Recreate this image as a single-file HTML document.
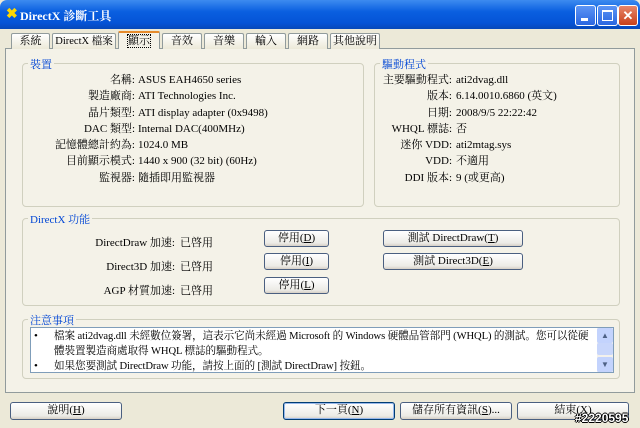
<!DOCTYPE html>
<html><head><meta charset="utf-8"><style>
*{margin:0;padding:0;box-sizing:border-box}
body{width:640px;height:428px;background:#ece9d8;font-family:"Liberation Serif","Noto Serif CJK SC","Noto Sans CJK TC",serif;font-size:11px;color:#000;position:relative;overflow:hidden}
.a{position:absolute;white-space:nowrap}
.title{left:0;top:0;width:640px;height:29px;background:linear-gradient(#3d8bf0,#0a5fe0 40%,#0553d6 80%,#0748b8);border-radius:7px 7px 0 0}
.tb{top:5px;width:21px;height:21px;border:1px solid #fff;border-radius:3px;background:linear-gradient(#5d95f5,#2a66e0)}
.tab{top:33px;height:16px;border:1px solid #919b9c;border-bottom:none;background:linear-gradient(#fff,#ece9d8);text-align:center;line-height:15px;border-radius:2px 2px 0 0}
.panel{left:5px;top:48px;width:630px;height:345px;border:1px solid #919b9c;background:#f4f2e8}
.grp{border:1px solid #d0d0bf;border-radius:4px}
.gt{color:#0046d5;background:#f4f2e8;padding:0 2px}
.r{text-align:right}
.btn{border:1px solid #4a5f80;border-radius:3px;background:linear-gradient(#fff,#ecebe6 80%,#d6d0c5);text-align:center;line-height:15px}
</style></head><body>
<div class="a title"></div>
<div class="a" style="left:6px;top:6px;color:#ffd700;font-size:14px;font-weight:bold">✖</div>
<div class="a" style="left:20px;top:7px;color:#fff;font-weight:bold;font-size:12px">DirectX 診斷工具</div>
<div class="a tb" style="left:575px"><div style="position:absolute;left:5px;top:12px;width:7px;height:3px;background:#fff"></div></div>
<div class="a tb" style="left:597px"><div style="position:absolute;left:4px;top:4px;width:11px;height:11px;border:1px solid #fff;border-top-width:2px"></div></div>
<div class="a tb" style="left:618px;width:20px;background:linear-gradient(#e8866a,#c8401a);color:#fff;text-align:center;font-weight:bold;font-size:13px;line-height:19px">✕</div>

<div class="a panel"></div>
<div class="a tab" style="left:11px;width:39px">系統</div>
<div class="a tab" style="left:52px;width:64px;font-size:10.5px">DirectX 檔案</div>
<div class="a tab" style="left:118px;top:31px;width:42px;height:18px;background:#f4f2e8;border-top:2px solid #e68b2c;line-height:16px"><span style="outline:1px dotted #000">顯示</span></div>
<div class="a tab" style="left:162px;width:40px">音效</div>
<div class="a tab" style="left:204px;width:40px">音樂</div>
<div class="a tab" style="left:246px;width:40px">輸入</div>
<div class="a tab" style="left:288px;width:40px">網路</div>
<div class="a tab" style="left:330px;width:50px">其他說明</div>

<div class="a grp" style="left:22px;top:63px;width:342px;height:144px"></div>
<div class="a gt" style="left:28px;top:56px">裝置</div>
<div class="a r" style="left:30px;top:72px;width:105px;line-height:16.3px">名稱:<br>製造廠商:<br>晶片類型:<br>DAC 類型:<br>記憶體總計約為:<br>目前顯示模式:<br>監視器:</div>
<div class="a" style="left:138px;top:72px;line-height:16.3px">ASUS EAH4650 series<br>ATI Technologies Inc.<br>ATI display adapter (0x9498)<br>Internal DAC(400MHz)<br>1024.0 MB<br>1440 x 900 (32 bit) (60Hz)<br>隨插即用監視器</div>

<div class="a grp" style="left:374px;top:63px;width:246px;height:144px"></div>
<div class="a gt" style="left:380px;top:56px">驅動程式</div>
<div class="a r" style="left:378px;top:72px;width:74px;line-height:16.3px">主要驅動程式:<br>版本:<br>日期:<br>WHQL 標誌:<br>迷你 VDD:<br>VDD:<br>DDI 版本:</div>
<div class="a" style="left:456px;top:72px;line-height:16.3px">ati2dvag.dll<br>6.14.0010.6860 (英文)<br>2008/9/5 22:22:42<br>否<br>ati2mtag.sys<br>不適用<br>9 (或更高)</div>

<div class="a grp" style="left:22px;top:218px;width:598px;height:88px"></div>
<div class="a gt" style="left:28px;top:211px">DirectX 功能</div>
<div class="a r" style="left:60px;top:231px;width:115px;line-height:24px">DirectDraw 加速:<br>Direct3D 加速:<br>AGP 材質加速:</div>
<div class="a" style="left:180px;top:231px;line-height:24px">已啓用<br>已啓用<br>已啓用</div>
<div class="a btn" style="left:264px;top:230px;width:65px;height:17px">停用(<u>D</u>)</div>
<div class="a btn" style="left:264px;top:253px;width:65px;height:17px">停用(<u>I</u>)</div>
<div class="a btn" style="left:264px;top:277px;width:65px;height:17px">停用(<u>L</u>)</div>
<div class="a btn" style="left:383px;top:230px;width:140px;height:17px">測試 DirectDraw(<u>T</u>)</div>
<div class="a btn" style="left:383px;top:253px;width:140px;height:17px">測試 Direct3D(<u>E</u>)</div>

<div class="a grp" style="left:22px;top:319px;width:598px;height:60px"></div>
<div class="a gt" style="left:28px;top:312px">注意事項</div>
<div class="a" style="left:30px;top:327px;width:584px;height:46px;background:#fff;border:1px solid #7f9db9"></div>
<div class="a" style="left:34px;top:329px;line-height:15px">•<br><br>•</div>
<div class="a" style="left:54px;top:329px;line-height:15px;font-size:10.6px;letter-spacing:-0.1px">檔案 ati2dvag.dll 未經數位簽署，這表示它尚未經過 Microsoft 的 Windows 硬體品管部門 (WHQL) 的測試。您可以從硬<br>體裝置製造商處取得 WHQL 標誌的驅動程式。<br>如果您要測試 DirectDraw 功能，請按上面的 [測試 DirectDraw] 按鈕。</div>
<div class="a" style="left:597px;top:328px;width:16px;height:44px;background:#f3f1ec"></div>
<div class="a" style="left:597px;top:328px;width:16px;height:15px;background:#c3d3fd;border-radius:2px;color:#4d6185;font-size:8px;text-align:center;line-height:15px">▲</div>
<div class="a" style="left:597px;top:343px;width:16px;height:12px;background:#c8d6fb;border-radius:2px"></div>
<div class="a" style="left:597px;top:357px;width:16px;height:15px;background:#c3d3fd;border-radius:2px;color:#4d6185;font-size:8px;text-align:center;line-height:15px">▼</div>

<div class="a btn" style="left:10px;top:402px;width:112px;height:18px">說明(<u>H</u>)</div>
<div class="a btn" style="left:283px;top:402px;width:112px;height:18px;border-color:#003c74;box-shadow:inset 0 0 0 1px #98b8ea">下一頁(<u>N</u>)</div>
<div class="a btn" style="left:400px;top:402px;width:112px;height:18px">儲存所有資訊(<u>S</u>)...</div>
<div class="a btn" style="left:517px;top:402px;width:112px;height:18px">結束(<u>X</u>)</div>
<div class="a" style="left:575px;top:411px;color:#fff;font-family:'Liberation Sans',sans-serif;font-size:12px;font-weight:bold;text-shadow:-1px 0 #000,1px 0 #000,0 -1px #000,0 1px #000">#2220595</div>
</body></html>
